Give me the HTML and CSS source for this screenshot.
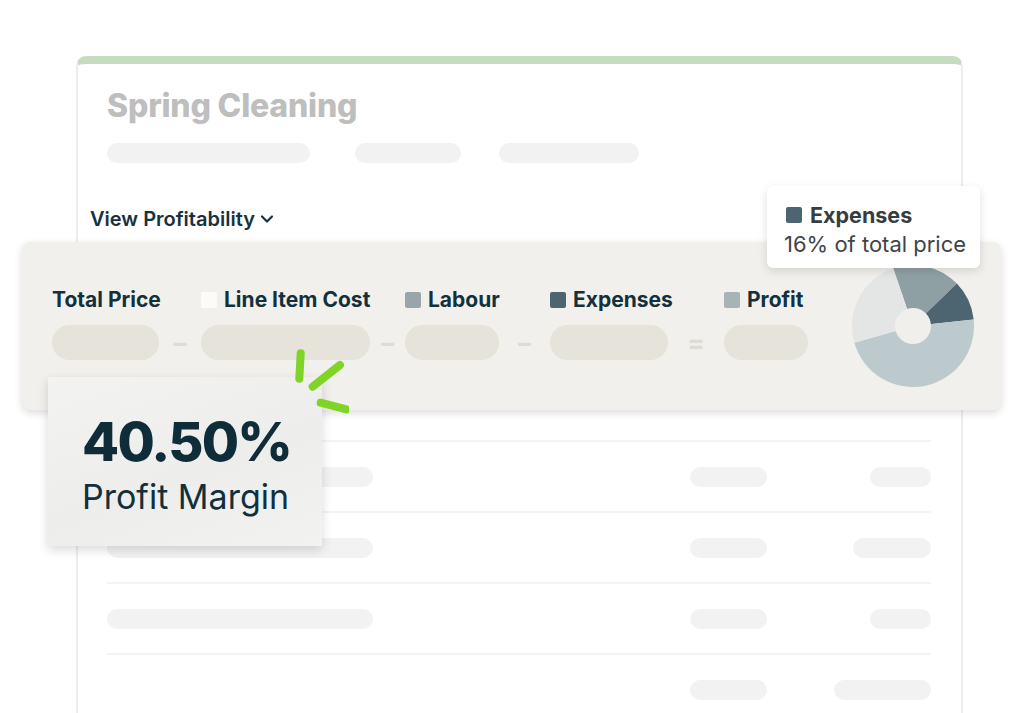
FILE: index.html
```html
<!DOCTYPE html>
<html lang="en">
<head>
    <meta charset="UTF-8">
    <meta name="viewport" content="width=device-width, initial-scale=1.0">
    <title>Spring Cleaning - Profitability</title>
    <link rel="stylesheet" href="styles.css">
</head>
<body>
    <div class="job-card">
        <h1 class="job-title">Spring Cleaning</h1>
        <div class="skeleton-row">
            <span class="skeleton" style="width: 203px"></span>
            <span class="skeleton" style="width: 106px"></span>
            <span class="skeleton" style="width: 140px"></span>
        </div>

        <button class="toggle">
            View Profitability
            <svg width="16" height="16" viewBox="0 0 16 16"><path d="M3 5.5l5 5 5-5" fill="none" stroke="#16323e" stroke-width="2.2" stroke-linecap="round" stroke-linejoin="round"/></svg>
        </button>

        <div class="profit-panel">
            <div class="formula">
                <div class="label">Total Price</div>
                <div></div>
                <div class="label"><span class="swatch white"></span>Line Item Cost</div>
                <div></div>
                <div class="label"><span class="swatch labour"></span>Labour</div>
                <div></div>
                <div class="label"><span class="swatch expenses"></span>Expenses</div>
                <div></div>
                <div class="label"><span class="swatch profit"></span>Profit</div>

                <div class="pill"></div>
                <div class="op">&minus;</div>
                <div class="pill"></div>
                <div class="op">&minus;</div>
                <div class="pill"></div>
                <div class="op">&minus;</div>
                <div class="pill"></div>
                <div class="op">=</div>
                <div class="pill"></div>
            </div>
            <svg class="pie" width="122" height="122" viewBox="0 0 122 122">
                <path d="M61 61 L41.14 3.32 A61 61 0 0 1 104.88 18.62 Z" fill="#8fa0a5"/>
                <path d="M61 61 L104.88 18.62 A61 61 0 0 1 121.67 54.62 Z" fill="#4d6570"/>
                <path d="M61 61 L121.67 54.62 A61 61 0 0 1 2.36 77.81 Z" fill="#bccace"/>
                <path d="M61 61 L2.36 77.81 A61 61 0 0 1 41.14 3.32 Z" fill="#e4e6e6"/>
                <circle cx="61" cy="61" r="18" fill="#f0efeb"/>
            </svg>
        </div>

        <div class="table">
            <div class="table-row">
                <span class="skeleton wide"></span>
                <span class="skeleton mid"></span>
                <span class="skeleton" style="width: 61px"></span>
            </div>
            <div class="table-row">
                <span class="skeleton wide"></span>
                <span class="skeleton mid"></span>
                <span class="skeleton" style="width: 78px"></span>
            </div>
            <div class="table-row">
                <span class="skeleton wide"></span>
                <span class="skeleton mid"></span>
                <span class="skeleton" style="width: 61px"></span>
            </div>
            <div class="table-row">
                <span class="skeleton wide blank"></span>
                <span class="skeleton mid"></span>
                <span class="skeleton" style="width: 97px"></span>
            </div>
        </div>

        <!-- floating bits -->
        <div class="tooltip">
            <div class="tooltip-title"><span class="swatch expenses"></span>Expenses</div>
            <div class="tooltip-text">16% of total price</div>
        </div>

        <div class="margin-card">
            <div class="margin-value">40.50%</div>
            <div class="margin-label">Profit Margin</div>
        </div>

        <svg class="sparks" width="70" height="70" viewBox="0 0 70 70">
            <g stroke="#7fd425" stroke-width="8" stroke-linecap="round" fill="none">
                <path d="M21.7 5.3 L20.3 30.7"/>
                <path d="M61 17 L33.7 38.7"/>
                <path d="M41.7 54.7 L67.3 61.3"/>
            </g>
        </svg>
    </div>
</body>
</html>
```

FILE: styles.css
```css
/* Job card with profitability breakdown */
body {
    margin: 0;
    background: #fff;
    font-family: Inter, "Noto Sans", sans-serif;
    color: #12303c;
    overflow: hidden;
}

.job-card {
    position: relative;
    width: 824px;
    min-height: 640px;
    margin: 56px 0 0 76px;
    padding: 23px 30px 0 29px;
    background: #fff;
    border-top: 8px solid #c6dcbf;
    border-left: 2px solid #ededed;
    border-right: 2px solid #ededed;
    border-radius: 10px 10px 0 0;
}

.job-title {
    margin: 0;
    font-size: 32px;
    line-height: 38px;
    font-weight: 800;
    color: #bebebe;
    letter-spacing: -0.2px;
}

.skeleton-row {
    display: flex;
    gap: 45px;
    margin-top: 18px;
}

.skeleton {
    display: block;
    height: 20px;
    border-radius: 10px;
    background: #f2f2f2;
}

.skeleton-row .skeleton:nth-child(3) {
    margin-left: -7px;
}

.toggle {
    display: flex;
    align-items: center;
    gap: 4px;
    margin: 44px 0 0 -17px;
    padding: 0;
    border: none;
    background: none;
    font-family: inherit;
    font-size: 20px;
    line-height: 24px;
    font-weight: 600;
    color: #16323e;
}

.profit-panel {
    display: flex;
    align-items: center;
    justify-content: space-between;
    height: 168px;
    margin: 11px -70px 0 -85px;
    padding: 0 27px 0 30px;
    box-sizing: border-box;
    background: #f1f0ec;
    border-radius: 8px;
    box-shadow: 0 3px 8px rgba(0, 0, 0, 0.14);
}

.formula {
    display: grid;
    grid-template-columns: 107px 42px 169px 35px 94px 51px 118px 56px 84px;
    row-gap: 13px;
    margin-top: -4px;
}

.label {
    display: flex;
    align-items: center;
    font-size: 21px;
    line-height: 24px;
    font-weight: 700;
    color: #13303c;
    white-space: nowrap;
}

.swatch {
    display: inline-block;
    flex: none;
    width: 16px;
    height: 16px;
    margin-right: 7px;
    border-radius: 2px;
}

.swatch.white { background: #fbfbf8; }
.swatch.labour { background: #98a6ab; }
.swatch.expenses { background: #4d6570; }
.swatch.profit { background: #a7b3b7; }

.pill {
    height: 35px;
    border-radius: 18px;
    background: #e5e3da;
}

.op {
    display: flex;
    align-items: center;
    justify-content: center;
    font-size: 26px;
    font-weight: 700;
    color: #dedcd3;
}

.table {
    margin-top: 30px;
}

.table-row {
    display: flex;
    align-items: center;
    height: 71px;
    border-top: 2px solid #f4f4f4;
    box-sizing: border-box;
}

.table-row .wide {
    width: 266px;
}

.table-row .blank {
    visibility: hidden;
}

.table-row .mid {
    width: 77px;
    margin-left: 317px;
    margin-right: auto;
}

.tooltip {
    position: absolute;
    left: 689px;
    top: 122px;
    width: 213px;
    height: 82px;
    padding: 17px 0 0 17px;
    box-sizing: border-box;
    background: #fff;
    border-radius: 6px;
    box-shadow: 0 3px 10px rgba(0, 0, 0, 0.13);
}

.tooltip-title {
    display: flex;
    align-items: center;
    font-size: 21.5px;
    line-height: 24px;
    font-weight: 700;
    color: #363d41;
}

.tooltip-title .swatch {
    margin-left: 2px;
    margin-right: 8px;
}

.tooltip-text {
    margin-top: 4px;
    font-size: 22px;
    line-height: 26px;
    color: #3f4447;
}

.margin-card {
    position: absolute;
    left: -30px;
    top: 313px;
    width: 274px;
    height: 169px;
    padding: 35px 0 0 34px;
    box-sizing: border-box;
    background: linear-gradient(160deg, #f3f3f2 0%, #ededec 55%, #f2f2f1 100%);
    box-shadow: 0 4px 10px rgba(0, 0, 0, 0.15);
}

.margin-value {
    font-size: 54px;
    line-height: 60px;
    font-weight: 800;
    letter-spacing: -1.8px;
    color: #0f2c39;
}

.margin-label {
    margin-top: 5px;
    font-size: 34px;
    line-height: 40px;
    color: #12303c;
}

.sparks {
    position: absolute;
    left: 201px;
    top: 284px;
}
```
